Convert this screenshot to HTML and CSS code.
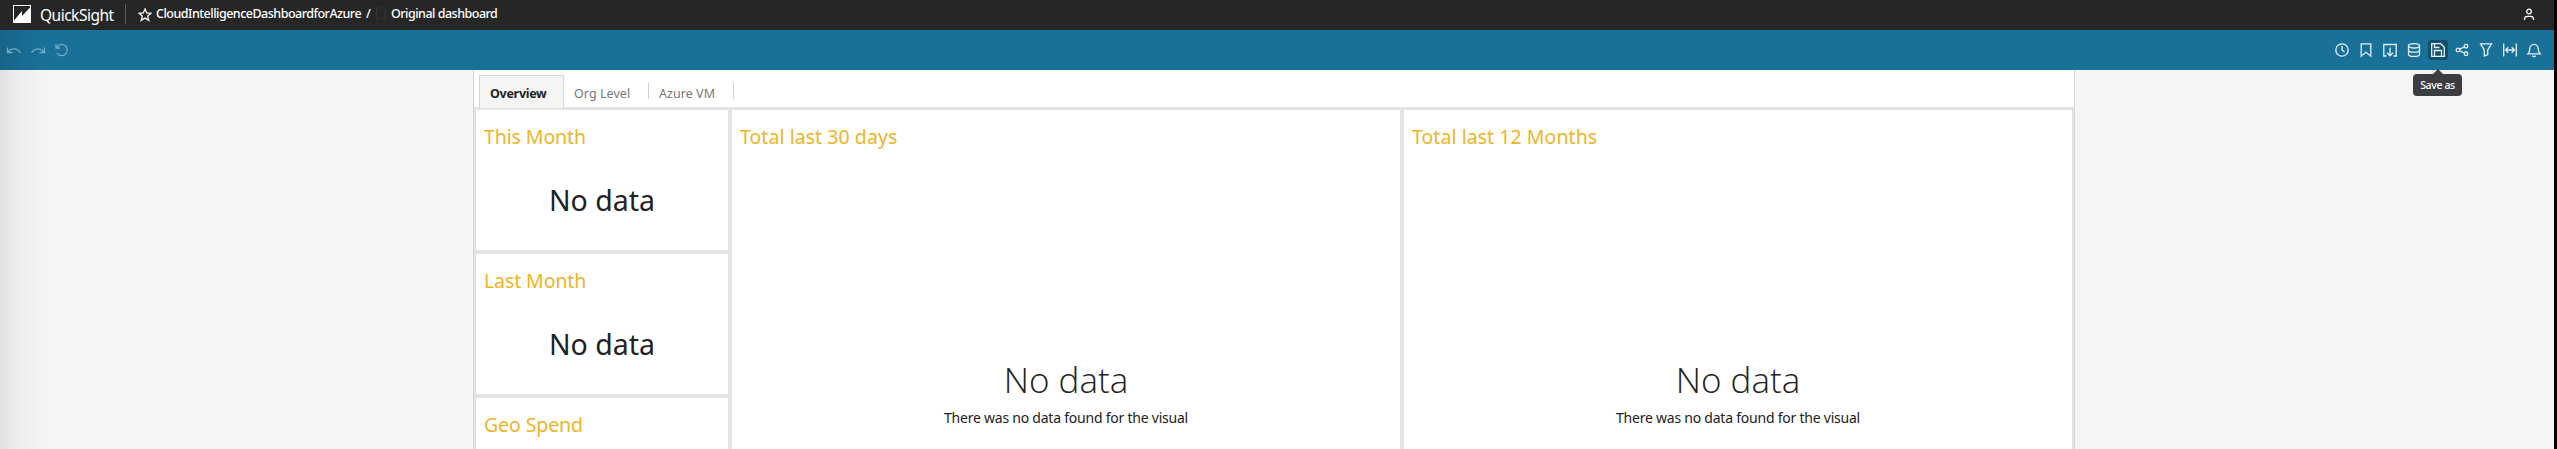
FILE: index.html
```html
<!DOCTYPE html>
<html lang="en">
<head>
<meta charset="utf-8">
<title>QuickSight</title>
<link rel="stylesheet" href="styles.css">
</head>
<body>
<div class="app">
  <header class="topbar">
    <svg class="logo" viewBox="0 0 18 18"><rect width="18" height="18" fill="#fff"/><path d="M1 15.500L9 6v5l8-8.500V1H1Z" fill="#262626"/></svg>
    <span class="brand">QuickSight</span>
    <span class="rule"></span>
    <svg class="star" viewBox="0 0 14 14"><path d="M7 1l1.700 4 4.300.3-3.300 2.800 1.100 4.300L7 10.100l-3.800 2.300 1.100-4.300L1 5.300 5.300 5Z"/></svg>
    <span class="crumb crumb-name">CloudIntelligenceDashboardforAzure</span>
    <span class="crumb slash">/</span>
    <svg class="ghost" viewBox="0 0 12 14"><path d="M1.500 1h9v12L6 9.500 1.500 13Z"/></svg>
    <span class="crumb crumb-view">Original dashboard</span>
    <svg class="user" viewBox="0 0 12 13"><circle cx="6" cy="3.500" r="2.300"/><path d="M1.500 12V11a3 3 0 0 1 3-2.700h3a3 3 0 0 1 3 2.700v1"/></svg>
  </header>
  <div class="toolbar">
    <div class="history">
      <svg viewBox="0 0 16 16"><path d="M1.500 5.500v5h5M1.500 10.500C5 5.500 11.500 5.500 14.500 11"/></svg>
      <svg viewBox="0 0 16 16"><path d="M14.500 5.500v5h-5M14.500 10.500C11 5.500 4.500 5.500 1.500 11"/></svg>
      <svg viewBox="0 0 16 16"><path d="M2 2v4h4M2.500 5.700A5.600 5.600 0 1 1 2.800 11"/></svg>
    </div>
    <div class="tools">
      <span class="tool"><svg viewBox="0 0 16 16"><circle cx="8" cy="8" r="6.200"/><path d="M8 4v4l2.500 2"/></svg></span>
      <span class="tool"><svg viewBox="0 0 16 16"><path d="M3.200 1.800h9.600v12.400L8 10.300l-4.800 3.900Z"/></svg></span>
      <span class="tool"><svg viewBox="0 0 16 16"><path d="M4.500 14H1.800V2.500h12.400V14h-2.700M8 5.500v8M5 10.800l3 3 3-3"/></svg></span>
      <span class="tool"><svg viewBox="0 0 16 16"><ellipse cx="8" cy="3.800" rx="5.500" ry="2.200"/><path d="M2.500 3.800v8.400c0 1.200 2.500 2.200 5.500 2.200s5.500-1 5.500-2.200V3.800M2.500 8c0 1.200 2.500 2.200 5.500 2.200s5.500-1 5.500-2.200"/></svg></span>
      <span class="tool active"><svg viewBox="0 0 16 16"><path d="M1.700 1.700h9l3.600 3.600v9H1.700ZM4.500 14V8.500h7V14M4.500 2v3.500h5"/></svg><span class="tip">Save as</span></span>
      <span class="tool"><svg viewBox="0 0 16 16"><circle cx="4" cy="8" r="1.800"/><circle cx="12" cy="4.200" r="1.800"/><circle cx="12" cy="11.800" r="1.800"/><path d="M5.700 7.200l4.700-2.200M5.700 8.800l4.700 2.200"/></svg></span>
      <span class="tool"><svg viewBox="0 0 16 16"><path d="M2.500 1.800h11L9.700 8v4.500L6.300 14V8Z"/></svg></span>
      <span class="tool"><svg viewBox="0 0 16 16"><path d="M1.700 1.500v13M14.300 1.500v13M3.800 8h8.400M6.300 5.300L3.600 8l2.700 2.700M9.700 5.300L12.400 8l-2.700 2.700"/></svg></span>
      <span class="tool"><svg viewBox="0 0 16 16"><path d="M2 11.800c1.800-1.500 1.800-3 1.800-5a4.200 4.500 0 0 1 8.400 0c0 2 0 3.500 1.800 5ZM6.300 13.800c1 .8 2.400.8 3.400 0"/></svg></span>
    </div>
  </div>
  <main class="stage">
    <section class="sheet">
      <nav class="tabs">
        <span class="tab current"><b>Overview</b></span>
        <span class="tab other">Org Level</span>
        <span class="tab other">Azure VM</span>
      </nav>
      <div class="grid">
        <div class="side">
          <article class="card kpi"><h2>This Month</h2><p>No data</p></article>
          <article class="card kpi"><h2>Last Month</h2><p>No data</p></article>
          <article class="card kpi"><h2>Geo Spend</h2></article>
        </div>
        <article class="card chart"><h2>Total last 30 days</h2><p class="empty">No data</p><p class="note">There was no data found for the visual</p></article>
        <article class="card chart"><h2>Total last 12 Months</h2><p class="empty">No data</p><p class="note">There was no data found for the visual</p></article>
      </div>
    </section>
  </main>
</div>
</body>
</html>
```
FILE: styles.css
```css
* { box-sizing: border-box; }
body { margin: 0; background: #000; font-family: "Noto Sans", "Open Sans", sans-serif; color: #222; }
h2, p { margin: 0; font-weight: 400; white-space: nowrap; }
svg { display: block; flex: none; fill: none; stroke: #fff; stroke-width: 1.3; }
.app { width: 2554px; height: 449px; overflow: hidden; display: flex; flex-direction: column; background: #f5f5f5; }
.topbar { height: 30px; flex: none; background: #262626; display: flex; align-items: center; padding-left: 13px; color: #fff; white-space: nowrap; }
.logo { width: 18px; height: 18px; stroke: none; margin-top: -2px; }
.brand { width: 74px; margin-left: 9px; font-size: 15.5px; letter-spacing: -.5px; line-height: 28px; }
.rule { width: 1px; height: 20px; background: #5c5c5c; margin: -2px 0 0 11px; }
.star { width: 14px; height: 14px; margin: -1px 0 0 12px; }
.crumb { font-size: 12.5px; font-weight: 500; line-height: 28px; margin-top: -2px; }
.crumb-name { width: 206px; margin-left: 4px; letter-spacing: -.5px; }
.slash { width: 5px; margin-left: 4px; }
.ghost { width: 12px; height: 14px; margin: -2px 0 0 4px; stroke: #333; stroke-width: 1; }
.crumb-view { margin-left: 4px; letter-spacing: -.5px; }
.user { width: 12px; height: 13px; margin: -1px 19px 0 auto; }
.toolbar { height: 40px; flex: none; background: linear-gradient(90deg, #176489, #19719a 45px); display: flex; align-items: center; justify-content: space-between; padding: 0 10px 0 6px; }
.history { display: flex; gap: 8px; }
.history svg { width: 16px; height: 16px; stroke: #76aac3; stroke-width: 1.3; }
.tools { display: flex; gap: 4px; }
.tool { position: relative; width: 20px; height: 20px; display: grid; place-items: center; border-radius: 3px; }
.tool svg { width: 16px; height: 16px; stroke: #e5f0f5; }
.active { background: #124f6c; }
.tip { position: absolute; top: 34px; left: 50%; width: 49px; height: 22px; margin-left: -25px; border-radius: 4px; background: #3c3d42; color: #fff; font-size: 10.5px; font-weight: 500; line-height: 22px; letter-spacing: -.35px; text-align: center; white-space: nowrap; z-index: 2; }
.tip::before { content: ""; position: absolute; top: -5px; left: 20px; border: 5px solid transparent; border-top: 0; border-bottom-color: #3c3d42; }
.stage { flex: 1; min-height: 0; background: linear-gradient(90deg, #e1e1e1, #ececec 16px, #f5f5f5 45px); }
.sheet { width: 1602px; height: 379px; margin-left: 473px; border: solid #d5d5d5; border-width: 0 1px; background: #e3e3e3; display: flex; flex-direction: column; }
.tabs { height: 37px; flex: none; background: #fff; display: flex; padding: 5px 0 0 5px; }
.tab { font-size: 12.5px; line-height: 37px; color: #777; }
.current { width: 85px; height: 33px; padding-left: 10px; border: 1px solid #d5d5d5; border-bottom: 0; background: #f5f5f5; color: #222; letter-spacing: -.3px; line-height: 35px; }
.other { width: 85px; padding-left: 10px; letter-spacing: .05px; background: linear-gradient(#d0d0d0, #d0d0d0) right 8px / 1px 16px no-repeat; }
.grid { flex: 1; min-height: 0; display: grid; grid-template-columns: 252px 668px 668px; gap: 4px; padding: 3px 2px 0; }
.side { display: grid; grid-template-rows: 140px 140px 1fr; gap: 4px; min-height: 0; }
.card { background: #fff; min-height: 0; overflow: hidden; }
.card h2 { padding: 13px 0 0 8px; font-size: 19.5px; font-weight: 450; line-height: 27px; letter-spacing: -.1px; color: #efb425; }
.chart h2 { letter-spacing: .05px; }
.kpi p { font-size: 28.5px; font-weight: 450; line-height: 40px; text-align: center; margin-top: 30px; }
.empty { font-family: "Open Sans", sans-serif; font-size: 35px; font-weight: 300; line-height: 46px; text-align: center; margin-top: 207px; }
.note { font-size: 14px; line-height: 20px; text-align: center; letter-spacing: -.23px; margin-top: 5px; }
```
